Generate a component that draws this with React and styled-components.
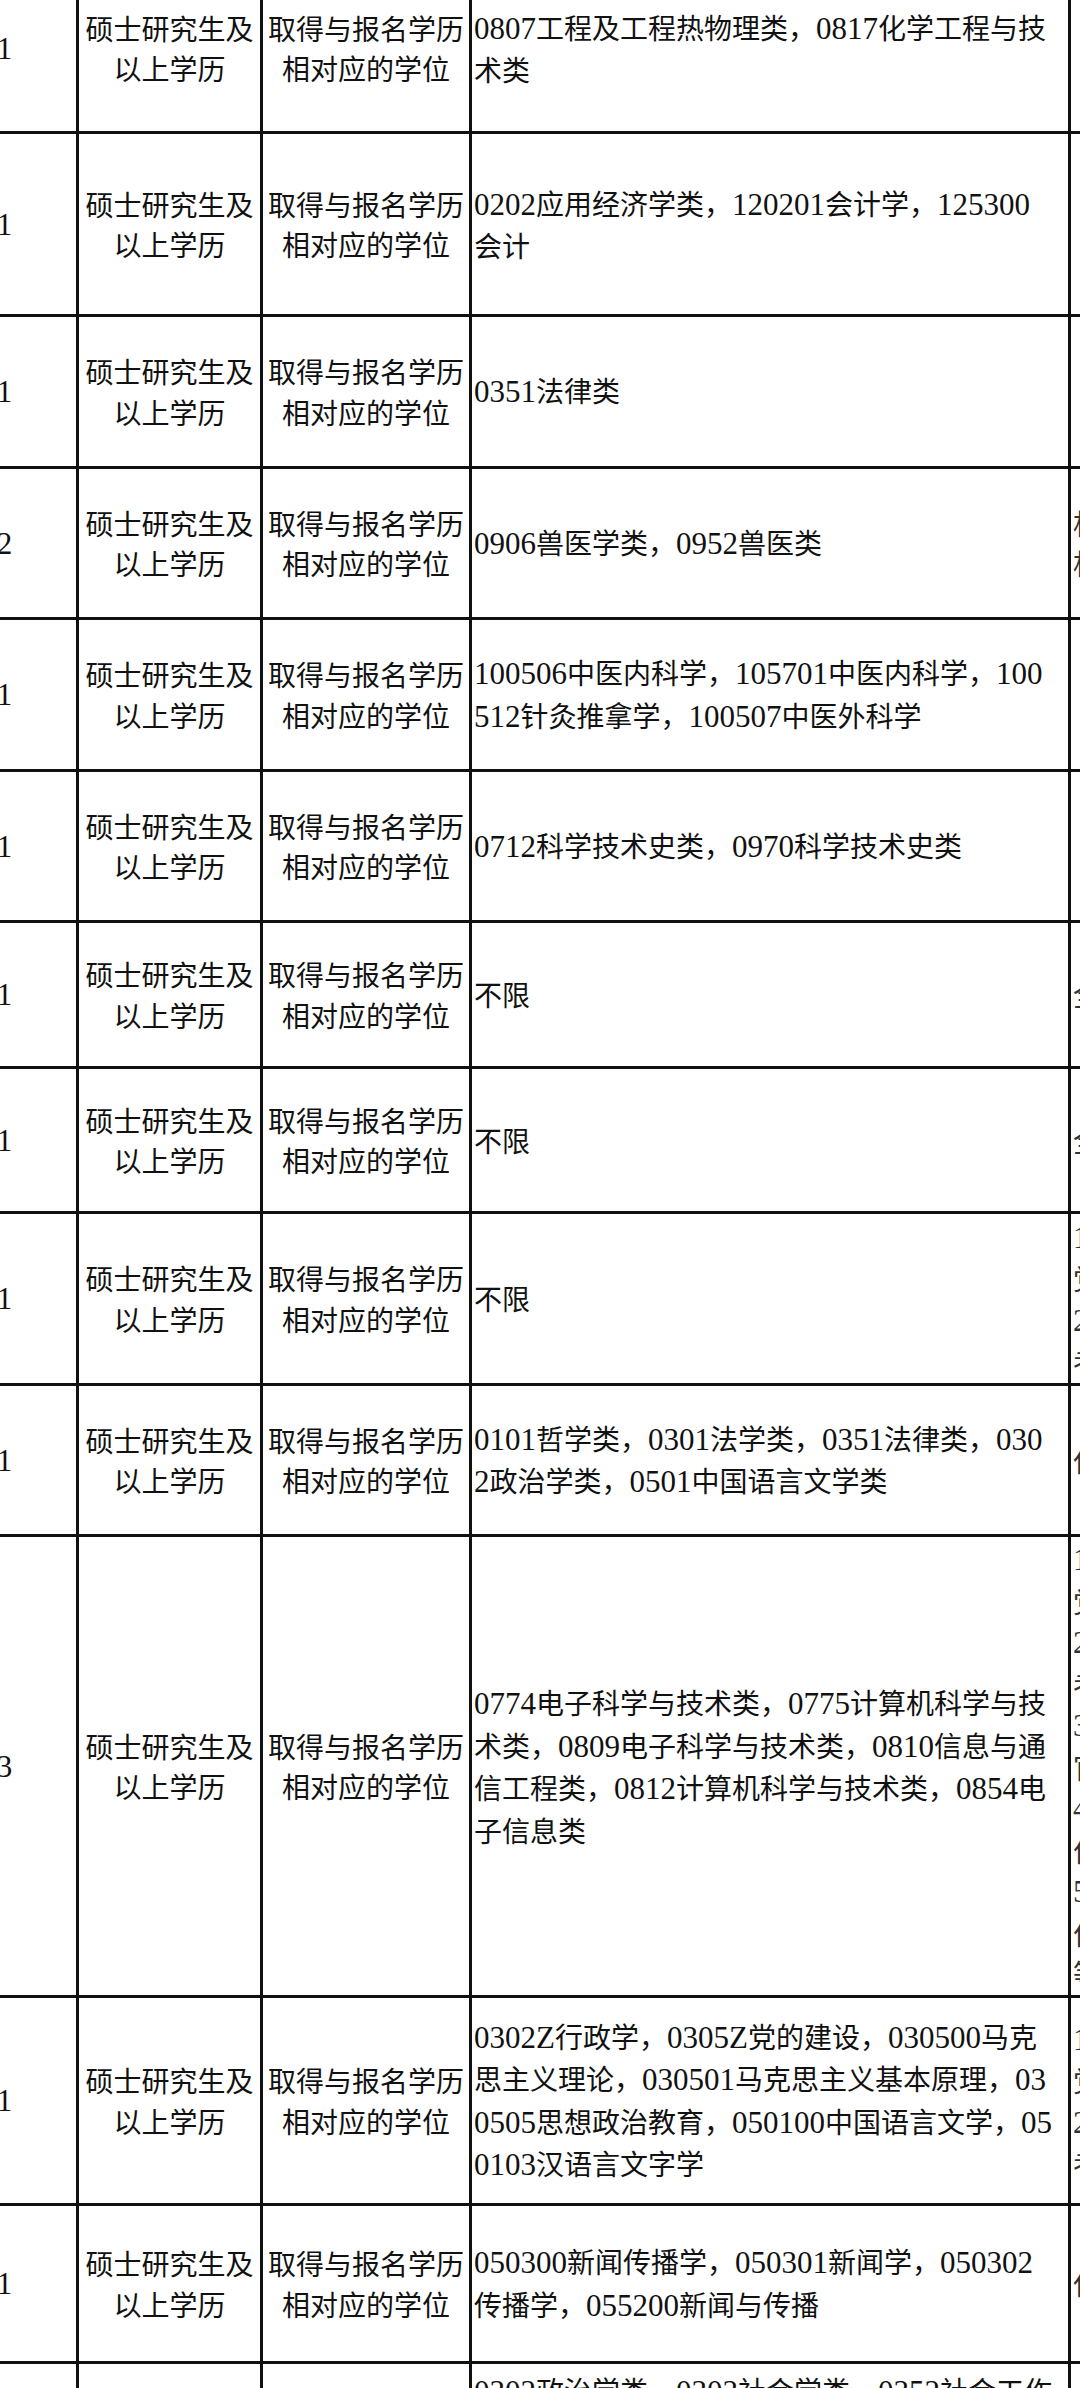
import React from 'react'
import styled, { createGlobalStyle } from 'styled-components'

const GlobalStyle = createGlobalStyle`
  html, body {
    margin: 0;
    padding: 0;
    background: #fff;
    overflow: hidden;
  }
`;

const Viewport = styled.div`
  width: 1080px;
  height: 2388px;
  overflow: hidden;
  background: #fff;
`;

const Sheet = styled.table`
  border-collapse: collapse;
  table-layout: fixed;
  width: 1438px;
  margin: -38px 0 0 -70px;
  font-family: "Noto Sans CJK SC", "Noto Sans", sans-serif;
  font-size: 28px;
  line-height: 40.5px;
  color: #111;
`;

const Row = styled.tr`
  height: ${(props) => props.h}px;
`;

const Cell = styled.td`
  border: 3px solid #111;
  padding: 0 ${(props) => (props.center ? '0' : '2px')};
  text-align: ${(props) => (props.center ? 'center' : 'left')};
  vertical-align: middle;
  overflow: hidden;
  color: ${(props) => (props.muted ? '#333' : '#111')};
`;

const Latin = styled.span`
  font-family: "Liberation Serif", serif;
  font-size: 31px;
`;

const Line = styled.div`
  white-space: nowrap;
`;

const cols = [146, 184, 209, 599, 300];

const runs = (text) =>
  text.split(/([0-9A-Za-z.]+)/).map((part, i) =>
    /[0-9A-Za-z]/.test(part) ? <Latin key={i}>{part}</Latin> : part
  );

const rows = [
  { h: 169, n: '1', major: ['0807工程及工程热物理类，0817化学工程与技', '术类'], note: [] },
  { h: 183, n: '1', major: ['0202应用经济学类，120201会计学，125300', '会计'], note: [] },
  { h: 152, n: '1', major: ['0351法律类'], note: [] },
  { h: 151, n: '2', major: ['0906兽医学类，0952兽医类'], note: ['相关专业执业资格', '相应资格证书'] },
  { h: 152, n: '1', major: ['100506中医内科学，105701中医内科学，100', '512针灸推拿学，100507中医外科学'], note: [] },
  { h: 151, n: '1', major: ['0712科学技术史类，0970科学技术史类'], note: [] },
  { h: 146, n: '1', major: ['不限'], note: ['全日制普通高校毕业生'] },
  { h: 145, n: '1', major: ['不限'], note: ['全日制普通高校毕业生'] },
  { h: 172, n: '1', major: ['不限'], note: ['1.中共党员（含预备', '党员）；', '2.具有相关工作经验', '考虑优先'] },
  { h: 151, n: '1', major: ['0101哲学类，0301法学类，0351法律类，030', '2政治学类，0501中国语言文学类'], note: ['仅限应届毕业生'] },
  {
    h: 461,
    n: '3',
    major: [
      '0774电子科学与技术类，0775计算机科学与技',
      '术类，0809电子科学与技术类，0810信息与通',
      '信工程类，0812计算机科学与技术类，0854电',
      '子信息类',
    ],
    note: [
      '1.中共党员（含预备',
      '党员）；',
      '2.具有计算机技术与软件',
      '考试中级及以上证书；',
      '3.熟悉政府网站及',
      '官方新媒体运维；',
      '4.具有2年以上相关工',
      '作经历；',
      '5.能适应加班及值班',
      '作息安排',
      '等工作要求。',
    ],
  },
  {
    h: 208,
    n: '1',
    major: [
      '0302Z行政学，0305Z党的建设，030500马克',
      '思主义理论，030501马克思主义基本原理，03',
      '0505思想政治教育，050100中国语言文学，05',
      '0103汉语言文字学',
    ],
    note: ['1.中共党员（含预备', '党员）；', '2.需参加', '考察'],
  },
  { h: 158, n: '1', major: ['050300新闻传播学，050301新闻学，050302', '传播学，055200新闻与传播'], note: ['仅限应届毕业生'] },
  { h: 140, n: '1', major: ['0302政治学类，0303社会学类，0352社会工作', '，1204公共管理类', '不限'], note: ['仅限应届毕业生', '中共党员'] },
];

const App = () => {
  return (
    <Viewport>
      <GlobalStyle />
      <Sheet>
        <colgroup>
          {cols.map((w, i) => (
            <col key={i} style={{ width: w }} />
          ))}
        </colgroup>
        <tbody>
          {rows.map((row, i) => (
            <Row key={i} h={row.h}>
              <Cell center>
                <Latin>{row.n}</Latin>
              </Cell>
              <Cell center>硕士研究生及以上学历</Cell>
              <Cell center>取得与报名学历相对应的学位</Cell>
              <Cell>
                {row.major.map((line, j) => (
                  <Line key={j}>{runs(line)}</Line>
                ))}
              </Cell>
              <Cell muted>
                {row.note.map((line, j) => (
                  <Line key={j}>{runs(line)}</Line>
                ))}
              </Cell>
            </Row>
          ))}
        </tbody>
      </Sheet>
    </Viewport>
  )
}

export default App
